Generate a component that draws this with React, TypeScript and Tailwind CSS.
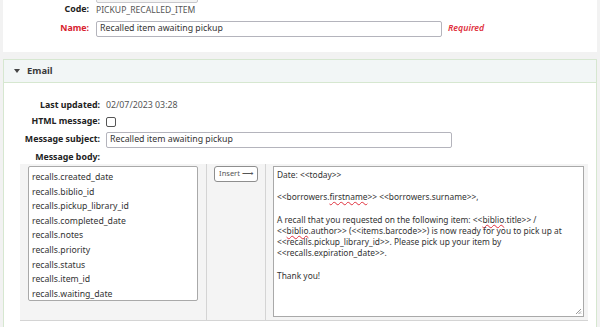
const items = [
  "recalls.created_date",
  "recalls.biblio_id",
  "recalls.pickup_library_id",
  "recalls.completed_date",
  "recalls.notes",
  "recalls.priority",
  "recalls.status",
  "recalls.item_id",
  "recalls.waiting_date",
];

function Sp({ children }: { children: React.ReactNode }) {
  return (
    <span className="underline decoration-wavy decoration-[#e0303c] decoration-1 underline-offset-[1px]">
      {children}
    </span>
  );
}

export default function App() {
  return (
    <div className="w-[600px] h-[327px] overflow-hidden bg-[#f2f2f2] text-[#333] font-['Noto_Sans',sans-serif]">
      {/* top panel */}
      <div className="mx-[3px] h-[52px] bg-white flex flex-col">
        <div className="ml-[93px] -mt-[13px] h-[16px] w-[102px] rounded-[2px] border border-[#c8c8cc] bg-[#f4f4f4]" />
        <div className="mt-[1px] h-[12px] flex items-center gap-[7px]">
          <div className="w-[86px] text-right text-[8.8px] font-bold text-[#222]">Code:</div>
          <div className="text-[8.6px] text-[#555]">PICKUP_RECALLED_ITEM</div>
        </div>
        <div className="mt-[5px] h-[16px] flex items-center gap-[7px]">
          <div className="w-[86px] text-right text-[8.8px] font-bold text-[#d8222e]">Name:</div>
          <div className="w-[346px] h-[16px] rounded-[2px] border border-[#b4b4bc] bg-white flex items-center px-[3px] text-[8.8px] text-[#333]">
            Recalled item awaiting pickup
          </div>
          <div className="ml-[-1px] text-[8.8px] italic font-semibold text-[#e0303c]">Required</div>
        </div>
      </div>

      {/* email fieldset */}
      <div className="mx-[3px] mt-[7px] border border-[#d6e7d0] bg-white h-[280px]">
        <div className="h-[23px] bg-[#f2f6f6] border-b border-[#d6e7d0] flex items-center pl-[10px] gap-[7px]">
          <svg width="6" height="4" viewBox="0 0 6 4">
            <path d="M0 0 L6 0 L3 4 Z" fill="#444" />
          </svg>
          <span className="text-[9.4px] font-bold text-[#3a3a3a]">Email</span>
        </div>
        <div className="flex flex-col pt-[15px]">
          <div className="h-[16px] flex items-center gap-[6px]">
            <div className="w-[96px] text-right text-[8.8px] font-bold text-[#222]">Last updated:</div>
            <div className="text-[8.8px] text-[#555]">02/07/2023 03:28</div>
          </div>
          <div className="h-[16px] flex items-center gap-[6px]">
            <div className="w-[96px] text-right text-[8.8px] font-bold text-[#222]">HTML message:</div>
            <div className="w-[10px] h-[10px] rounded-[2px] border border-[#555] bg-white" />
          </div>
          <div className="mt-[2px] h-[16px] flex items-center gap-[6px]">
            <div className="w-[96px] text-right text-[8.8px] font-bold text-[#222]">Message subject:</div>
            <div className="w-[346px] h-[16px] rounded-[2px] border border-[#b4b4bc] bg-white flex items-center px-[3px] text-[8.8px] text-[#333]">
              Recalled item awaiting pickup
            </div>
          </div>
          <div className="mt-[4px] h-[12px] flex items-center gap-[6px]">
            <div className="w-[96px] text-right text-[8.8px] font-bold text-[#222]">Message body:</div>
          </div>

          {/* table row */}
          <div className="ml-[16px] w-[568px] h-[157px] bg-[#f4f4f4] border-b border-[#d4d4d4] flex">
            <div className="w-[187px] border-r border-[#d4d4d4] pl-[8px] pt-[2px]">
              <div className="w-[170px] h-[135px] rounded-[2px] border border-[#a9a9a9] bg-white pt-[3px] px-[3px] text-[8.7px] leading-[14.6px] text-[#333]">
                {items.map((it) => (
                  <div key={it}>{it}</div>
                ))}
              </div>
            </div>
            <div className="w-[59px] border-r border-[#d4d4d4] pl-[7px] pt-[2px]">
              <div className="w-[44px] h-[16px] rounded-[3px] border border-[#8e8e8e] bg-white flex items-center justify-center text-[7.5px] text-[#555]">
                Insert ⟶
              </div>
            </div>
            <div className="flex-1 pl-[7px] pt-[2px]">
              <div className="relative w-[311px] h-[151px] border border-[#a9a9a9] bg-white px-[3px] pt-[2px] text-[8.4px] leading-[11.2px] text-[#333]">
                <div>Date: &lt;&lt;today&gt;&gt;</div>
                <div>&nbsp;</div>
                <div>
                  &lt;&lt;borrowers.<Sp>firstname</Sp>&gt;&gt; &lt;&lt;borrowers.surname&gt;&gt;,
                </div>
                <div>&nbsp;</div>
                <div className="whitespace-nowrap">
                  A recall that you requested on the following item: &lt;&lt;<Sp>biblio</Sp>.title&gt;&gt; /
                </div>
                <div className="whitespace-nowrap">
                  &lt;&lt;<Sp>biblio</Sp>.author&gt;&gt; (&lt;&lt;items.barcode&gt;&gt;) is now ready for you to pick up at
                </div>
                <div>&lt;&lt;recalls.pickup_library_id&gt;&gt;. Please pick up your item by</div>
                <div>&lt;&lt;recalls.expiration_date&gt;&gt;.</div>
                <div>&nbsp;</div>
                <div>Thank you!</div>
                <svg className="absolute right-[1px] bottom-[1px]" width="7" height="7" viewBox="0 0 7 7">
                  <path d="M6 1 L1 6 M6 3.5 L3.5 6 M6 5.5 L5.5 6" stroke="#999" strokeWidth="1" />
                </svg>
              </div>
            </div>
          </div>
        </div>
      </div>
    </div>
  );
}
